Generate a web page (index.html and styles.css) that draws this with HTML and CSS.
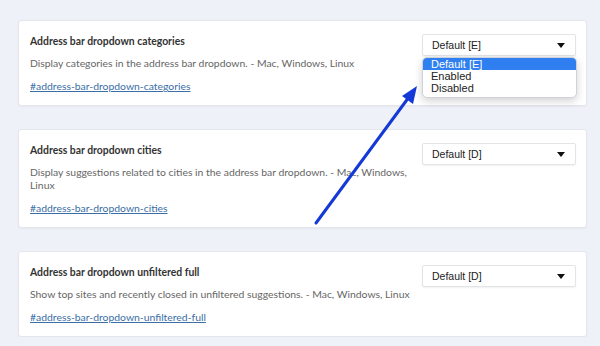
FILE: index.html
```html
<!DOCTYPE html>
<html lang="en">
<head>
    <meta charset="UTF-8">
    <meta name="viewport" content="width=device-width, initial-scale=1.0">
    <title>Flags</title>
    <link rel="stylesheet" href="styles.css">
</head>
<body>

    <div class="flags">
        <div class="flag">
            <div class="flag-text">
                <h3 class="flag-title">Address bar dropdown categories</h3>
                <p class="flag-desc">Display categories in the address bar dropdown. - Mac, Windows, Linux</p>
                <a class="flag-link" href="#address-bar-dropdown-categories">#address-bar-dropdown-categories</a>
            </div>
            <div class="select-wrap">
                <div class="select">
                    <span>Default [E]</span>
                    <span class="caret"></span>
                </div>
                <!-- open dropdown list -->
                <ul class="menu">
                    <li class="selected">Default [E]</li>
                    <li>Enabled</li>
                    <li>Disabled</li>
                </ul>
            </div>
        </div>

        <div class="flag">
            <div class="flag-text">
                <h3 class="flag-title">Address bar dropdown cities</h3>
                <p class="flag-desc">Display suggestions related to cities in the address bar dropdown. - Mac, Windows, Linux</p>
                <a class="flag-link" href="#address-bar-dropdown-cities">#address-bar-dropdown-cities</a>
            </div>
            <div class="select-wrap">
                <div class="select">
                    <span>Default [D]</span>
                    <span class="caret"></span>
                </div>
            </div>
        </div>

        <div class="flag">
            <div class="flag-text">
                <h3 class="flag-title">Address bar dropdown unfiltered full</h3>
                <p class="flag-desc">Show top sites and recently closed in unfiltered suggestions. - Mac, Windows, Linux</p>
                <a class="flag-link" href="#address-bar-dropdown-unfiltered-full">#address-bar-dropdown-unfiltered-full</a>
            </div>
            <div class="select-wrap">
                <div class="select">
                    <span>Default [D]</span>
                    <span class="caret"></span>
                </div>
            </div>
        </div>
    </div>

    <!-- annotation arrow pointing at the open menu -->
    <svg class="arrow" width="600" height="346" viewBox="0 0 600 346">
        <line x1="316" y1="223" x2="409" y2="97" stroke="#1539d6" stroke-width="3" stroke-linecap="round"/>
        <polygon points="417,86 402,96 413,104" fill="#1539d6"/>
    </svg>

</body>
</html>
```

FILE: styles.css
```css
body {
    font-family: Lato, "Open Sans", sans-serif;
    background-color: #eef1f7;
    margin: 0;
    padding: 20px 13px 0 18px;
    position: relative;
}
.flags {
    display: flex;
    flex-direction: column;
    gap: 23px;
}
.flag {
    display: flex;
    gap: 8px;
    background-color: #fff;
    border: 1px solid #e4e6eb;
    border-radius: 3px;
    box-shadow: 0 1px 2px rgba(0,0,0,0.04);
    padding: 13px 10px 12px 11px;
}
.flag-text {
    flex: 1;
}
.flag-title {
    margin: 0 0 9px;
    font-size: 10.4px;
    line-height: 14px;
    font-weight: 700;
    color: #333;
}
.flag-desc {
    margin: 0 0 9px;
    font-size: 10.4px;
    line-height: 13px;
    color: #666;
}
.flag-link {
    display: block;
    font-size: 10.4px;
    line-height: 14px;
    color: #3a6ea5;
}
.select-wrap {
    position: relative;
    width: 154px;
}
.select {
    display: flex;
    justify-content: space-between;
    align-items: center;
    height: 20px;
    padding: 0 9px;
    border: 1px solid #e2e4e8;
    border-radius: 2px;
    box-shadow: 0 1px 2px rgba(0,0,0,0.06);
    font-family: "Liberation Sans", Arial, sans-serif;
    font-size: 10.5px;
    color: #222;
}
.caret {
    width: 0;
    height: 0;
    border-left: 4.5px solid transparent;
    border-right: 4.5px solid transparent;
    border-top: 5px solid #111;
    margin-right: 1px;
}
.menu {
    position: absolute;
    top: 23px;
    left: 0;
    width: 153px;
    margin: 0;
    padding: 0 0 3px;
    list-style: none;
    background-color: #fff;
    border: 1px solid #cfd2d8;
    border-radius: 5px;
    box-shadow: 0 3px 8px rgba(0,0,0,0.18);
    font-family: "Liberation Sans", Arial, sans-serif;
    font-size: 11px;
    color: #222;
    overflow: hidden;
}
.menu li {
    padding: 0 8px;
    line-height: 12px;
}
.menu .selected {
    background-color: #2f7ff0;
    color: #fff;
}
.arrow {
    position: absolute;
    top: 0;
    left: 0;
    pointer-events: none;
}
```
